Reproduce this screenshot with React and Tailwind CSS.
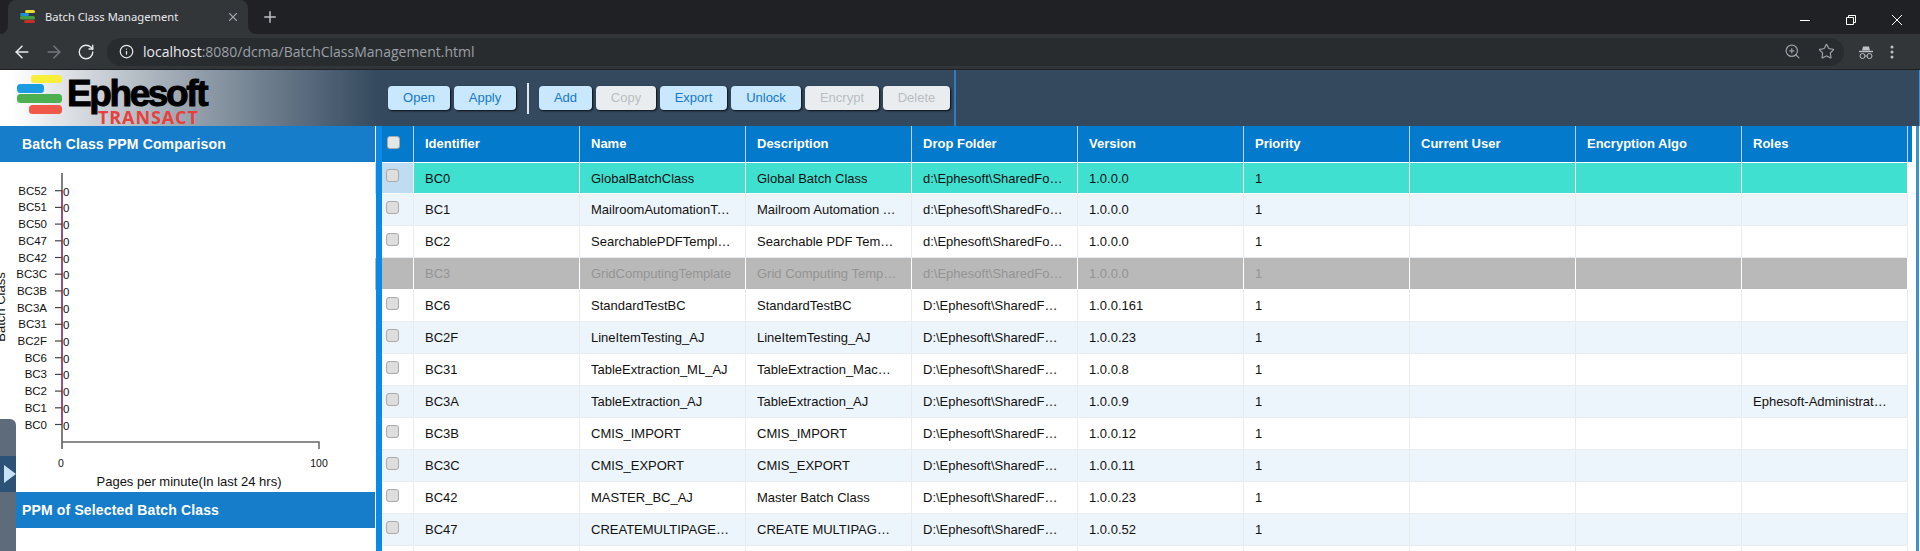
import { ArrowLeft, ArrowRight, RotateCw, Info, ZoomIn, Star, X, Plus } from 'lucide-react'

const LEGACY = 'd:\\Ephesoft\\SharedFolders\\final'
const SHARED = 'D:\\Ephesoft\\SharedFolders\\final'

const rows = [
    { id: 'BC0', name: 'GlobalBatchClass', desc: 'Global Batch Class', folder: LEGACY, version: '1.0.0.0', kind: 'selected' },
    { id: 'BC1', name: 'MailroomAutomationTemplate', desc: 'Mailroom Automation Template', folder: LEGACY, version: '1.0.0.0', kind: 'tint' },
    { id: 'BC2', name: 'SearchablePDFTemplate', desc: 'Searchable PDF Template', folder: LEGACY, version: '1.0.0.0', kind: 'plain' },
    { id: 'BC3', name: 'GridComputingTemplate', desc: 'Grid Computing Template', folder: LEGACY, version: '1.0.0.0', kind: 'disabled' },
    { id: 'BC6', name: 'StandardTestBC', desc: 'StandardTestBC', folder: SHARED, version: '1.0.0.161', kind: 'plain' },
    { id: 'BC2F', name: 'LineItemTesting_AJ', desc: 'LineItemTesting_AJ', folder: SHARED, version: '1.0.0.23', kind: 'tint' },
    { id: 'BC31', name: 'TableExtraction_ML_AJ', desc: 'TableExtraction_Mac…', folder: SHARED, version: '1.0.0.8', kind: 'plain' },
    { id: 'BC3A', name: 'TableExtraction_AJ', desc: 'TableExtraction_AJ', folder: SHARED, version: '1.0.0.9', roles: 'Ephesoft-Administrat…', kind: 'tint' },
    { id: 'BC3B', name: 'CMIS_IMPORT', desc: 'CMIS_IMPORT', folder: SHARED, version: '1.0.0.12', kind: 'plain' },
    { id: 'BC3C', name: 'CMIS_EXPORT', desc: 'CMIS_EXPORT', folder: SHARED, version: '1.0.0.11', kind: 'tint' },
    { id: 'BC42', name: 'MASTER_BC_AJ', desc: 'Master Batch Class', folder: SHARED, version: '1.0.0.23', kind: 'plain' },
    { id: 'BC47', name: 'CREATEMULTIPAGEFILES', desc: 'CREATE MULTIPAGE FILES', folder: SHARED, version: '1.0.0.52', kind: 'tint' },
]

const columns = ['Identifier', 'Name', 'Description', 'Drop Folder', 'Version', 'Priority', 'Current User', 'Encryption Algo', 'Roles']

const chartLabels = ['BC52', 'BC51', 'BC50', 'BC47', 'BC42', 'BC3C', 'BC3B', 'BC3A', 'BC31', 'BC2F', 'BC6', 'BC3', 'BC2', 'BC1', 'BC0']

const rowStyles = {
    selected: 'bg-[#40e0d0] border-white text-[#111]',
    tint: 'bg-[#edf5fc] border-[#e9ecef] text-[#111]',
    plain: 'bg-white border-[#e9ecef] text-[#111]',
    disabled: 'bg-[#b9b9b9] border-white text-[#949494]',
}

function Favicon() {
    return (
        <svg width="16" height="14" viewBox="0 0 16 14" className="shrink-0">
            <rect x="5" y="0" width="10" height="3" rx="1.5" fill="#e8dc2e" />
            <rect x="0" y="3" width="9" height="3" rx="1.5" fill="#1b8fd8" />
            <rect x="0" y="6" width="15" height="3.5" rx="1.5" fill="#3f9e45" />
            <rect x="4" y="10" width="11" height="3" rx="1.5" fill="#c62f2a" />
        </svg>
    )
}

function ChromeBar() {
    return (
        <>
            <div className="flex h-[34px] items-end bg-[#202124] pl-2">
                <div className="relative flex h-[34px] w-[240px] items-center rounded-t-lg bg-[#323639] pl-3 pr-2 font-['Noto_Sans',sans-serif] text-[11.2px] text-[#e8eaed]">
                    {/* curved feet of the active tab */}
                    <div className="absolute -left-2 bottom-0 h-2 w-2 bg-[#323639]">
                        <div className="h-full w-full rounded-br-lg bg-[#202124]" />
                    </div>
                    <div className="absolute -right-2 bottom-0 h-2 w-2 bg-[#323639]">
                        <div className="h-full w-full rounded-bl-lg bg-[#202124]" />
                    </div>
                    <Favicon />
                    <span className="ml-[9px] flex-1 truncate">Batch Class Management</span>
                    <X size={14} strokeWidth={2} className="text-[#9aa0a6]" />
                </div>
                <Plus size={18} strokeWidth={2} className="mb-[8px] ml-[13px] text-[#bdc1c6]" />
                <div className="ml-auto mb-[9px] flex items-center gap-9 pr-[18px] text-white">
                    <svg width="10" height="10" viewBox="0 0 10 10" fill="none" stroke="currentColor"><path d="M0 5.5h10" /></svg>
                    <svg width="10" height="10" viewBox="0 0 10 10" fill="none" stroke="currentColor"><path d="M.5 2.5h7v7h-7zM2.5 2.5v-2h7v7h-2" /></svg>
                    <svg width="10" height="10" viewBox="0 0 10 10" fill="none" stroke="currentColor"><path d="M0 0l10 10M10 0L0 10" /></svg>
                </div>
            </div>
            <div className="flex h-9 items-center border-b border-[#1e2023] bg-[#323639]">
                <div className="flex w-[107px] items-center pl-[12px] gap-[12px]">
                    <ArrowLeft size={20} strokeWidth={1.8} className="text-[#e8eaed]" />
                    <ArrowRight size={20} strokeWidth={1.8} className="text-[#74787c]" />
                    <RotateCw size={18} strokeWidth={1.8} className="ml-px text-[#e8eaed]" />
                </div>
                <div className="flex h-[28px] w-[1737px] items-center rounded-full bg-[#292c2f] pl-3 pr-[9px] font-['Open_Sans',sans-serif] text-[14px]">
                    <Info size={15} className="text-[#e8eaed]" />
                    <span className="ml-[9px] text-[#e8eaed]">localhost</span>
                    <span className="text-[#9aa0a6]">:8080/dcma/BatchClassManagement.html</span>
                    <ZoomIn size={17} strokeWidth={1.7} className="ml-auto text-[#9aa0a6]" />
                    <Star size={17} strokeWidth={1.7} className="ml-[17px] text-[#9aa0a6]" />
                </div>
                <svg width="16" height="16" viewBox="0 0 16 16" className="ml-[14px] text-[#bdc1c6]" fill="none" stroke="currentColor">
                    <path d="M4 6.5l1-4h6l1 4z" fill="currentColor" stroke="none" />
                    <path d="M1 7.5h14" strokeWidth="1.4" />
                    <circle cx="4.5" cy="12" r="2.5" />
                    <circle cx="11.5" cy="12" r="2.5" />
                    <path d="M7 12h2" />
                </svg>
                <svg width="4" height="14" viewBox="0 0 4 14" className="ml-[16px] text-[#bdc1c6]" fill="currentColor">
                    <circle cx="2" cy="2" r="1.5" />
                    <circle cx="2" cy="7" r="1.5" />
                    <circle cx="2" cy="12" r="1.5" />
                </svg>
            </div>
        </>
    )
}

function Logo() {
    return (
        <svg width="215" height="56" viewBox="0 0 215 56" className="shrink-0">
            <rect x="31" y="5" width="31" height="8" rx="3" fill="#f9ee3a" />
            <rect x="17" y="14" width="27" height="9" rx="3.5" fill="#1b9ce0" />
            <rect x="17" y="24" width="45" height="9" rx="3.5" fill="#4caf50" />
            <rect x="29" y="35" width="33" height="9" rx="3.5" fill="#f0584a" />
            <text x="67" y="36" fontFamily="Liberation Sans" fontWeight="700" fontSize="37" letterSpacing="-2.4" stroke="#000" strokeWidth="1" fill="#000">Ephesoft</text>
            <text x="98" y="54" fontFamily="Open Sans" fontWeight="700" fontSize="18" letterSpacing="0.9" fill="#e8403c">TRANSACT</text>
        </svg>
    )
}

function ActionButton({ label, width, disabled }) {
    return (
        <button
            style={{ width }}
            className={`h-6 rounded-[4px] text-[13px] shadow-[1px_1px_2px_rgba(0,0,0,0.8)] ${disabled ? 'bg-[#eaedf0] text-[#b9bdc2]' : 'bg-[#c9e7fd] text-[#1679c9]'}`}
        >
            {label}
        </button>
    )
}

function Header() {
    return (
        <div className="flex h-14 border-r border-r-[#3d90d0] bg-[#34495e]">
            <div className="flex h-full w-[380px] shrink-0 bg-linear-to-r from-white from-[3%] to-[#34495e]">
                <Logo />
            </div>
            <div className="flex h-full items-center gap-1 border-r-2 border-r-[#2e7cc4] pl-2 pr-[4px]">
                <ActionButton label="Open" width={62} />
                <ActionButton label="Apply" width={62} />
                <div className="ml-[7px] mr-[6px] h-[31px] w-0.5 bg-[#dfe6ee]" />
                <ActionButton label="Add" width={53} />
                <ActionButton label="Copy" width={60} disabled />
                <ActionButton label="Export" width={67} />
                <ActionButton label="Unlock" width={70} />
                <ActionButton label="Encrypt" width={74} disabled />
                <ActionButton label="Delete" width={67} disabled />
            </div>
        </div>
    )
}

function PanelTitle({ children }) {
    return (
        <div className="flex h-9 items-center bg-[#167dcb] pl-[22px] text-sm font-bold tracking-[0.15px] text-white">
            {children}
        </div>
    )
}

function PpmChart() {
    return (
        <svg width="375" height="330" viewBox="0 0 375 330" className="block" fontFamily="Liberation Sans">
            <path d="M62 11V287" stroke="#555" strokeWidth="1.5" />
            <path d="M62 28V262" stroke="#a8327f" strokeWidth="1.2" />
            <path d="M62 280H319V287" stroke="#666" strokeWidth="1.5" fill="none" />
            {chartLabels.map((label, i) => {
                const y = 28.7 + i * 16.7
                return (
                    <g key={label}>
                        <path d={`M55 ${y}H62`} stroke="#444" strokeWidth="1.2" />
                        <text x="47" y={y + 4} textAnchor="end" fontSize="11.5" fill="#111">{label}</text>
                        <text x="63" y={y + 5} fontSize="11.5" fill="#111">0</text>
                    </g>
                )
            })}
            <text x="61" y="305" textAnchor="middle" fontSize="10.5" fill="#111">0</text>
            <text x="319" y="305" textAnchor="middle" fontSize="10.5" fill="#111">100</text>
            <text x="189" y="324" textAnchor="middle" fontSize="13" fill="#111">Pages per minute(In last 24 hrs)</text>
            <text transform="rotate(-90 5 145)" x="5" y="145" textAnchor="middle" fontSize="13" fill="#111">Batch Class</text>
        </svg>
    )
}

function LeftPanel() {
    return (
        <div className="relative mr-px w-[375px] shrink-0 bg-white">
            <PanelTitle>Batch Class PPM Comparison</PanelTitle>
            <PpmChart />
            <PanelTitle>PPM of Selected Batch Class</PanelTitle>
            {/* collapse handle sits over the panel edge */}
            <div className="absolute bottom-0 left-0 top-[293px] w-4 rounded-tr-md bg-[#5e6b7b]">
                <div className="mt-[37px] flex h-9 items-center bg-[#2d5278] pl-1">
                    <div className="h-0 w-0 border-y-[9px] border-l-[12px] border-y-transparent border-l-[#c8e3f7]" />
                </div>
            </div>
        </div>
    )
}

function Checkbox({ light }) {
    return <span className={`block h-[13px] w-[13px] rounded-[3px] border border-[#a9a9a9] ${light ? 'bg-[#e6e6e6]' : 'bg-[#dedede]'}`} />
}

function TableHeader() {
    return (
        <div className="flex h-[37px] w-[1530px] border-b border-white bg-[#047acd] text-[13px] font-bold text-white">
            <div className="h-full w-8 shrink-0 border-r border-[#b9d3e8] pl-[5px] pt-[10px]">
                <Checkbox light />
            </div>
            {columns.map((col) => (
                <div key={col} className="flex h-full w-[166px] shrink-0 items-center border-r border-[#b9d3e8] pl-[11px]">
                    {col}
                </div>
            ))}
        </div>
    )
}

function TableRow({ row }) {
    const cells = [row.id, row.name, row.desc, row.folder, row.version, '1', '', '', row.roles || '']
    const first = row.kind === 'selected'
    return (
        <div className={`flex w-[1526px] border-b ${first ? 'h-[31px]' : 'h-8'} ${rowStyles[row.kind]}`}>
            <div className={`h-full w-8 shrink-0 border-r pl-[4px] ${first ? 'bg-[#bfdcf2] pt-[6px]' : 'pt-[7px]'} border-inherit`}>
                {row.kind !== 'disabled' && <Checkbox />}
            </div>
            {cells.map((text, i) => (
                <div key={i} className="flex h-full w-[166px] shrink-0 items-center border-r border-inherit pl-[11px] pr-[13px] pt-px">
                    <span className="truncate">{text}</span>
                </div>
            ))}
        </div>
    )
}

export default function App() {
    return (
        <div className="flex h-[551px] w-[1920px] flex-col overflow-hidden bg-white font-['Liberation_Sans',sans-serif] text-[13px]">
            <ChromeBar />
            <Header />
            <div className="relative flex min-h-0 flex-1">
                <LeftPanel />
                <div className="w-1.5 shrink-0 bg-[#0a8ae6]" />
                <div className="min-w-0 flex-1 overflow-hidden">
                    <TableHeader />
                    {rows.map((row) => <TableRow key={row.id} row={row} />)}
                    <div className="flex h-8 w-[1526px]">
                        <div className="h-full w-8 shrink-0 border-r border-[#e9ecef]" />
                        {columns.map((col) => (
                            <div key={col} className="h-full w-[166px] shrink-0 border-r border-[#e9ecef]" />
                        ))}
                    </div>
                </div>
                {/* row highlight bleeding past the splitter */}
                <div className="absolute left-[375px] top-[37px] h-[31px] w-px bg-[#bfdcf2]" />
                <div className="absolute left-[375px] top-[132px] h-8 w-px bg-[#b9b9b9]" />
                <div className="absolute bottom-0 right-px top-0 w-[3px] bg-[#3d90d0]" />
            </div>
        </div>
    )
}
